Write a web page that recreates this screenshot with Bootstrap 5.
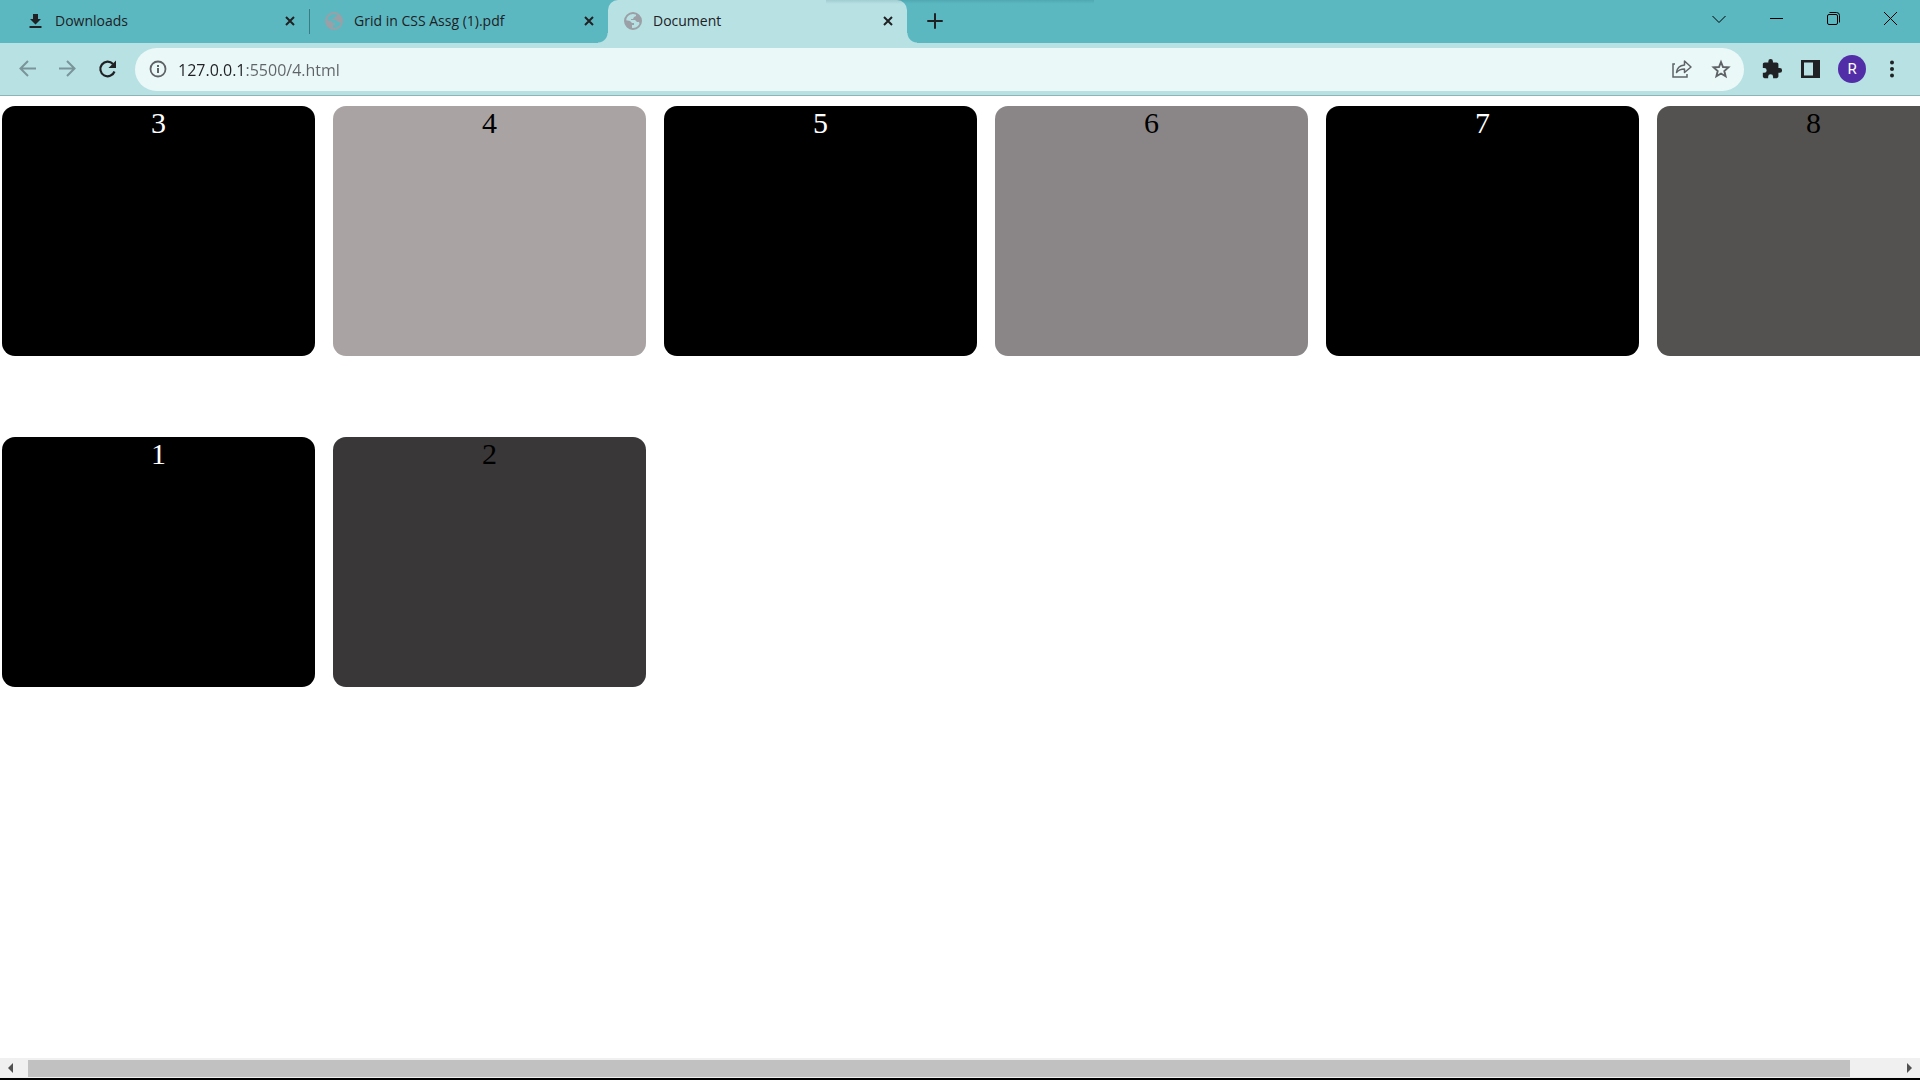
<!DOCTYPE html>
<html lang="en">
<head>
<meta charset="utf-8">
<meta name="viewport" content="width=device-width, initial-scale=1">
<title>Document</title>
<link href="https://cdn.jsdelivr.net/npm/bootstrap@5.3.0/dist/css/bootstrap.min.css" rel="stylesheet">
<style>
  :root { --strip: #5bb8c1; --bar: #b8e1e4; --ink: #202124; }
  body { font-family: "Open Sans", "Noto Sans", sans-serif; color: var(--ink); background: #fff; border-bottom: 2px solid #000; }
  button { background: none; border: 0; padding: 0; color: inherit; }
  svg { display: block; flex: none; }

  .tab-strip { height: 43px; background: var(--strip); padding-left: 10px; }
  .strip-shadow { top: 0; left: 43%; width: 14%; height: 4px; background: linear-gradient(rgba(0,60,70,.12), rgba(0,60,70,0)); }
  .browser-tab { width: 299px; padding: 0 12px 2px 16px; }
  .browser-tab a { color: var(--ink); font-size: 14px; line-height: 20px; text-decoration: none; gap: 11px; }
  .browser-tab.divided::after { content: ""; position: absolute; right: -1px; top: 9px; width: 1px; height: 25px; background: #3b7b82; }
  .browser-tab.current { background: var(--bar); border-radius: 10px 10px 0 0; }
  .browser-tab.current::before, .browser-tab.current::after { content: ""; position: absolute; bottom: 0; width: 10px; height: 10px; }
  .browser-tab.current::before { right: 100%; background: radial-gradient(circle at 0 0, transparent 9px, var(--bar) 10px); }
  .browser-tab.current::after { left: 100%; background: radial-gradient(circle at 100% 0, transparent 9px, var(--bar) 10px); }
  .new-tab { margin-left: 20px; padding-bottom: 2px; }
  .window-buttons { gap: 44px; padding: 0 23px 6px 0; color: #000; }

  .tool-bar { height: 53px; background: var(--bar); border-bottom: 1px solid #8fb4b7; padding: 0 20px 4px 18px; }
  .nav-buttons { gap: 20px; margin-right: 17px; }
  .address-box { height: 43px; background: #ebf8f8; border-radius: 22px; padding: 0 13px 0 14px; }
  .address-box input { border: 0; outline: 0; margin-left: 11px; padding: 2px 0 0; font-size: 16px; line-height: 24px; color: transparent;
    background: linear-gradient(to right, #202124 68px, #5f6368 68px); -webkit-background-clip: text; background-clip: text; }
  .address-actions { gap: 18px; }
  .side-buttons { gap: 18px; margin-left: 17px; }
  .avatar { width: 28px; height: 28px; border-radius: 50%; background: #512da8; color: #fff; font: 15px/28px Roboto, sans-serif; }

  .page-view { padding: 10px 2px; font-family: "Liberation Serif", serif; font-size: 30px; line-height: 34px; }
  .tile-grid { display: grid; grid-template-columns: repeat(6, 313px); grid-auto-rows: 250px; gap: 81px 18px; }
  .tile { border-radius: 13px; text-align: center; color: #000; }
  .tile.solid { background: #000; color: #fff; }

  .scroll-row { height: 20px; background: #f0f0f0; padding: 0 8px; color: #505050; }
  .scroll-track { padding: 2px 57px 1px 15px; }
  .scroll-thumb { background: #c1c1c1; }
</style>
<script src="https://cdn.jsdelivr.net/npm/bootstrap@5.3.0/dist/js/bootstrap.bundle.min.js"></script>
</head>
<body class="d-flex flex-column vh-100 overflow-hidden">
<svg width="0" height="0" class="position-absolute" aria-hidden="true">
  <symbol id="globe" viewBox="0 0 18 18"><circle cx="9" cy="9" r="8" fill="none" stroke="currentColor" stroke-width="2"/><path fill="currentColor" d="M1 8 6 9l2 2h2v2H8v4C4 17 1 13 1 9zM7 1h4l1 1v2l-2 1-1 2H7v1h4l2 2h2l1 2c2-5-1-10-6-11z"/></symbol>
  <symbol id="cross" viewBox="0 0 10 10"><path d="m1 1 8 8M9 1 1 9" stroke="currentColor" stroke-width="2" fill="none"/></symbol>
</svg>

<header class="flex-shrink-0">
  <div class="tab-strip d-flex position-relative">
    <div class="browser-tab divided d-flex align-items-center justify-content-between position-relative">
      <a href="#" class="d-flex align-items-center">
        <svg width="18" height="18" viewBox="0 0 18 18" fill="#202124"><path d="M7 2h5v5h3l-5.500 5.500L4 7h3zM3.500 14h12v2h-12z"/></svg>Downloads</a>
      <button type="button" aria-label="Close Downloads"><svg width="14" height="10"><use href="#cross"/></svg></button>
    </div>
    <div class="browser-tab d-flex align-items-center justify-content-between position-relative">
      <a href="#" class="d-flex align-items-center">
        <svg width="18" height="18" color="#9aa0a6"><use href="#globe"/></svg>Grid in CSS Assg (1).pdf</a>
      <button type="button" aria-label="Close Grid in CSS Assg"><svg width="14" height="10"><use href="#cross"/></svg></button>
    </div>
    <div class="browser-tab current d-flex align-items-center justify-content-between position-relative">
      <a href="#" class="d-flex align-items-center" aria-current="page">
        <svg width="18" height="18" color="#9aa0a6"><use href="#globe"/></svg>Document</a>
      <button type="button" aria-label="Close Document"><svg width="14" height="10"><use href="#cross"/></svg></button>
    </div>
    <button type="button" class="new-tab" aria-label="New tab"><svg width="16" height="16" viewBox="0 0 16 16"><path d="M8 1v14M1 8h14" stroke="#202124" stroke-width="2" stroke-linecap="round"/></svg></button>
    <div class="window-buttons d-flex align-items-center ms-auto">
      <button type="button" aria-label="Search tabs"><svg width="14" height="14" viewBox="0 0 14 14" fill="none" stroke="currentColor"><path d="m.5 4 6.500 6.500L13.500 4"/></svg></button>
      <button type="button" aria-label="Minimize"><svg width="13" height="13" viewBox="0 0 13 13" stroke="currentColor"><path d="M0 6.500h13"/></svg></button>
      <button type="button" aria-label="Restore"><svg width="13" height="13" viewBox="0 0 13 13" fill="none" stroke="currentColor"><rect x=".5" y="2.500" width="10" height="10" rx="1.500"/><path d="M2.500.5h7a3 3 0 0 1 3 3v7"/></svg></button>
      <button type="button" aria-label="Close window"><svg width="13" height="13" viewBox="0 0 13 13" stroke="currentColor"><path d="m0 0 13 13M13 0 0 13"/></svg></button>
    </div>
    <div class="strip-shadow position-absolute"></div>
  </div>

  <div class="tool-bar d-flex align-items-center pt-1">
    <div class="nav-buttons d-flex align-items-center">
      <button type="button" aria-label="Back"><svg width="20" height="20" viewBox="0 0 20 20" fill="none" stroke="#7a9599" stroke-width="2"><path d="M18 9.500H3M10 2 2.500 9.500 10 17"/></svg></button>
      <button type="button" aria-label="Forward"><svg width="20" height="20" viewBox="0 0 20 20" fill="none" stroke="#7a9599" stroke-width="2"><path d="M1 9.500h15M9 2l7.500 7.500L9 17"/></svg></button>
      <button type="button" aria-label="Reload"><svg width="20" height="20" viewBox="0 0 20 20"><path d="M15 5A7.300 7.300 0 1 0 16.500 12.500" fill="none" stroke="#202124" stroke-width="2.200"/><path d="M18 1.500V9h-7.500z" fill="#202124"/></svg></button>
    </div>
    <div class="address-box d-flex align-items-center flex-fill">
      <svg width="18" height="18" viewBox="0 0 18 18"><circle cx="9" cy="9" r="7.500" fill="none" stroke="#5f6368" stroke-width="1.800"/><path d="M8 8h2v5H8zM8 5h2v2H8z" fill="#5f6368"/></svg>
      <input type="text" class="flex-fill" aria-label="Address" value="127.0.0.1:5500/4.html" spellcheck="false">
      <div class="address-actions d-flex align-items-center">
        <button type="button" aria-label="Share"><svg width="22" height="20" viewBox="0 0 22 20" fill="none" stroke="#5f6368" stroke-width="1.500"><path d="M4 5H2v13h14v-3"/><path d="M5.500 13.500c.5-5 3-7 8-7.500V2l6.500 6-6.500 5.500V10c-4 0-6 1-8 3.500z" stroke-linejoin="round"/></svg></button>
        <button type="button" aria-label="Bookmark"><svg width="20" height="20" viewBox="0 0 20 20" fill="none" stroke="#5f6368" stroke-width="1.900"><path d="m10 3 2 5 5.400.4-4.100 3.600 1.300 5.300-4.600-2.800-4.600 2.800L6.700 12 2.600 8.400 8 8z"/></svg></button>
      </div>
    </div>
    <div class="side-buttons d-flex align-items-center">
      <button type="button" aria-label="Extensions"><svg width="22" height="22" viewBox="0 0 24 24" fill="#202124"><path d="M20.500 11H19V7c0-1.100-.9-2-2-2h-4V3.500a2.500 2.500 0 0 0-5 0V5H4c-1.100 0-2 .9-2 2v3.800h1.500a2.700 2.700 0 0 1 0 5.400H2V20c0 1.100.9 2 2 2h3.800v-1.500a2.700 2.700 0 0 1 5.400 0V22H17c1.100 0 2-.9 2-2v-4h1.500a2.500 2.500 0 0 0 0-5z"/></svg></button>
      <button type="button" aria-label="Side panel"><svg width="19" height="18" viewBox="0 0 19 18"><path d="M0 0h19v18H0zM3 2.500v13h9v-13z" fill="#202124" fill-rule="evenodd"/></svg></button>
      <button type="button" class="avatar" aria-label="Profile R">R</button>
      <button type="button" aria-label="Menu"><svg width="16" height="18" viewBox="0 0 16 18" fill="#202124"><circle cx="8" cy="2.500" r="2"/><circle cx="8" cy="9" r="2"/><circle cx="8" cy="15.500" r="2"/></svg></button>
    </div>
  </div>
</header>

<main class="page-view flex-fill overflow-hidden">
  <div class="tile-grid">
    <div class="tile solid">3</div>
    <div class="tile" style="background:#a9a3a3">4</div>
    <div class="tile solid">5</div>
    <div class="tile" style="background:#8a8687">6</div>
    <div class="tile solid">7</div>
    <div class="tile" style="background:#545250">8</div>
    <div class="tile solid">1</div>
    <div class="tile" style="background:#393737">2</div>
  </div>
</main>

<footer class="scroll-row d-flex align-items-stretch flex-shrink-0">
  <button type="button" aria-label="Scroll left"><svg width="5" height="10" viewBox="0 0 5 10" fill="currentColor"><path d="M5 0v10L0 5z"/></svg></button>
  <div class="scroll-track d-flex flex-fill"><div class="scroll-thumb flex-fill"></div></div>
  <button type="button" aria-label="Scroll right"><svg width="5" height="10" viewBox="0 0 5 10" fill="currentColor"><path d="M0 0v10l5-5z"/></svg></button>
</footer>
</body>
</html>
